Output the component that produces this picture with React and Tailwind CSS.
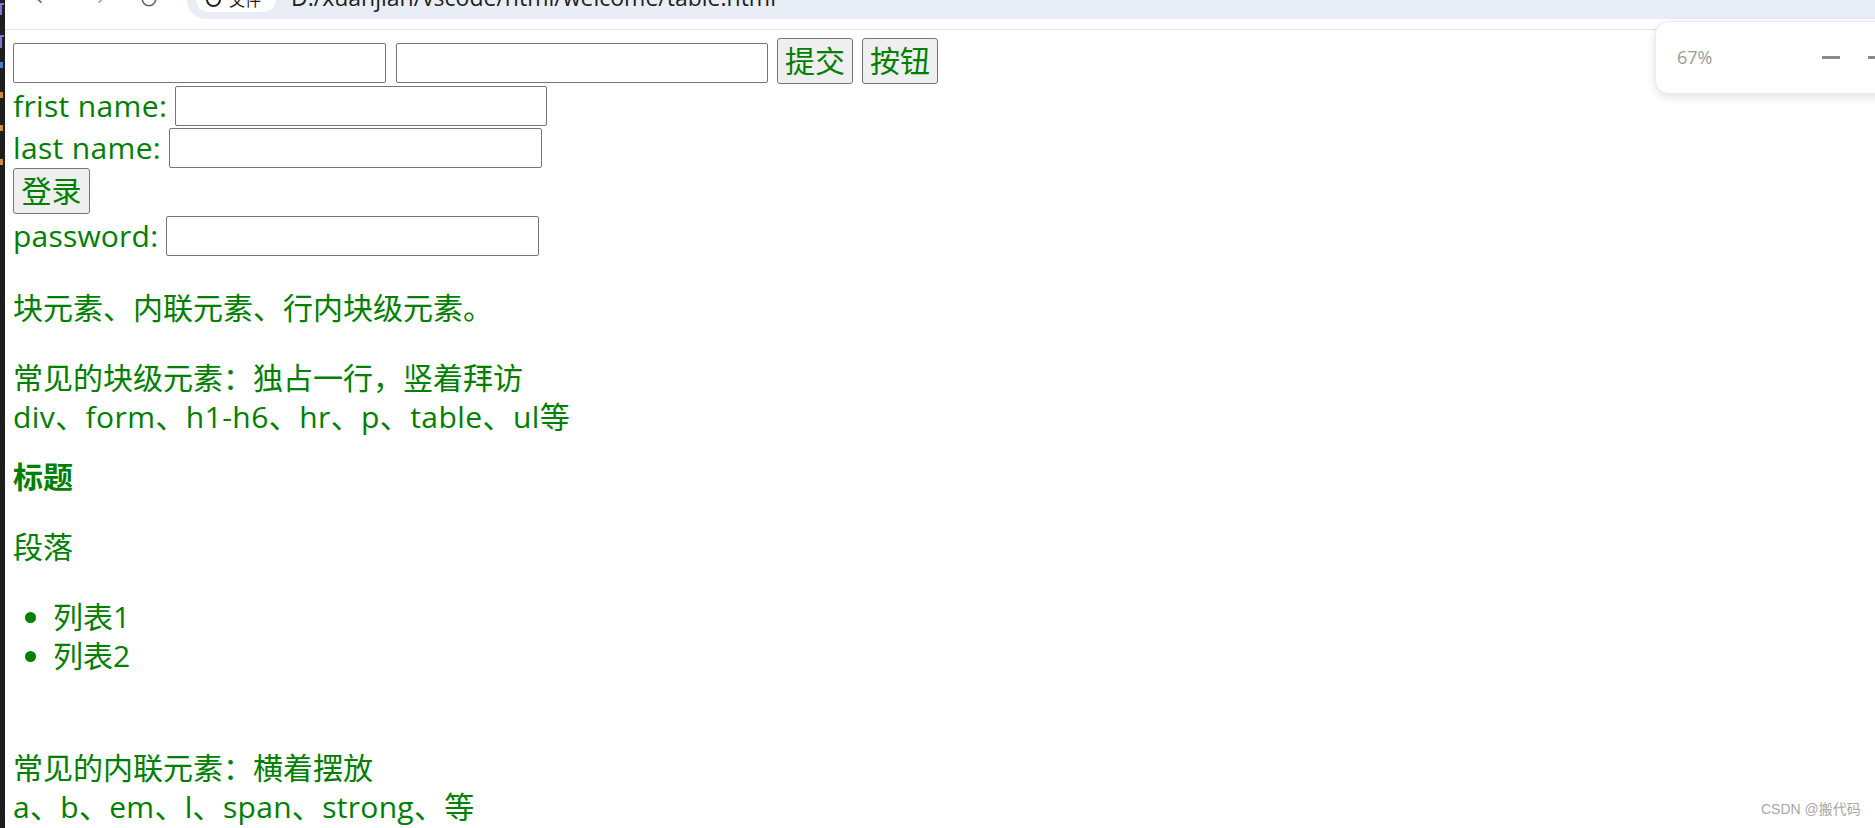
import React from "react";
import { ArrowLeft, ArrowRight, RotateCw } from "lucide-react";

function TextInput({ className = "" }) {
  return (
    <input
      type="text"
      readOnly
      className={`h-[40px] border border-[#767676] rounded-[2px] bg-white shrink-0 outline-none ${className}`}
    />
  );
}

function Btn({ children, className = "" }) {
  return (
    <button
      className={`h-[46px] w-[76px] shrink-0 bg-[#efefef] border border-[#767676] rounded-[3px] text-[30px] leading-[40px] text-[#008000] ${className}`}
    >
      {children}
    </button>
  );
}

export default function App() {
  return (
    <div className="relative w-[1875px] h-[828px] overflow-hidden bg-white flex">
      {/* dark editor strip on the left */}
      <div className="w-[5px] shrink-0 bg-[#1e1e1e] flex flex-col">
        <div className="mt-[3px] h-[12px] w-[4px] border-l-2 border-t-2 border-[#8b6fd6]" />
        <div className="mt-[20px] h-[13px] w-[4px] border-l-2 border-t-2 border-[#8b6fd6]" />
        <div className="mt-[14px] h-[6px] w-[3px] bg-[#4e7fc4]" />
        <div className="mt-[24px] h-[6px] w-[3px] bg-[#d08a48]" />
        <div className="mt-[27px] h-[6px] w-[3px] bg-[#d08a48]" />
        <div className="mt-[28px] h-[6px] w-[3px] bg-[#d08a48]" />
      </div>

      <div className="flex-1 flex flex-col min-w-0">
        {/* browser chrome (cut off at top) */}
        <div className="h-[30px] shrink-0 border-b border-[#e3e3e3] flex items-start overflow-hidden">
          <div className="w-[182px] shrink-0 flex items-start">
            <ArrowLeft className="ml-[27px] -mt-[12px] text-[#5f6368]" size={18} strokeWidth={2.2} />
            <ArrowRight className="ml-[40px] -mt-[12px] text-[#9aa0a6]" size={18} strokeWidth={2.2} />
            <RotateCw className="ml-[32px] -mt-[10px] text-[#5f6368]" size={18} strokeWidth={2.2} />
          </div>
          <div className="flex-1 h-[19px] bg-[#e9edf6] rounded-bl-[20px] flex items-start overflow-hidden">
            <div className="ml-[9px] w-[80px] h-[26px] -mt-[14px] bg-white rounded-full flex items-center px-[10px] gap-[8px] font-['Noto_Sans_CJK_SC',sans-serif] text-[16px] text-[#1f1f1f]">
              <span className="w-[15px] h-[15px] rounded-full border-2 border-[#1f1f1f] shrink-0" />
              <span className="leading-none">文件</span>
            </div>
            <div className="ml-[15px] -mt-[18px] font-['Open_Sans',sans-serif] text-[23px] leading-[30px] text-[#1f1f1f] whitespace-nowrap">
              D:/xuanjian/vscode/html/welcome/table.html
            </div>
          </div>
        </div>

        {/* page content */}
        <div className="pl-[8px] text-[30px] text-[#008000] font-['Open_Sans','Noto_Sans_CJK_SC',sans-serif]">
          <div className="mt-[8px] h-[46px] flex items-end">
            <TextInput className="w-[373px] mb-[1px]" />
            <TextInput className="ml-[10px] w-[372px] mb-[1px]" />
            <Btn className="ml-[9px]">提交</Btn>
            <Btn className="ml-[9px]">按钮</Btn>
          </div>
          <div className="mt-[2px] h-[40px] flex items-center">
            <span className="leading-[40px] whitespace-nowrap tracking-[0.35px]">frist name:</span>
            <TextInput className="ml-[8px] w-[372px]" />
          </div>
          <div className="mt-[2px] h-[40px] flex items-center">
            <span className="leading-[40px] whitespace-nowrap tracking-[0.35px]">last name:</span>
            <TextInput className="ml-[8px] w-[373px]" />
          </div>
          <div className="h-[46px] flex items-center">
            <Btn className="w-[77px]">登录</Btn>
          </div>
          <div className="mt-[2px] h-[40px] flex items-center">
            <span className="leading-[40px] whitespace-nowrap tracking-[0.2px]">password:</span>
            <TextInput className="ml-[8px] w-[373px]" />
          </div>

          <p className="mt-[32px] leading-[40px]">块元素、内联元素、行内块级元素。</p>
          <p className="mt-[30px] leading-[39px]">
            常见的块级元素：独占一行，竖着拜访
            <br />
            <span className="tracking-[0.42px]">div、form、h1-h6、hr、p、table、ul等</span>
          </p>
          <h4 className="mt-[21px] leading-[40px] font-bold">标题</h4>
          <p className="mt-[30px] leading-[40px]">段落</p>
          <ul className="mt-[30px] pl-[40px] list-disc leading-[39px]">
            <li>列表1</li>
            <li>列表2</li>
          </ul>
          <p className="mt-[73px] leading-[39px]">
            常见的内联元素：横着摆放
            <br />
            <span className="tracking-[0.3px]">a、b、em、l、span、strong、等</span>
          </p>
        </div>
      </div>

      {/* zoom popup */}
      <div className="absolute left-[1655px] top-[21px] w-[260px] h-[73px] bg-white rounded-[14px] border border-[#ececec] shadow-[0_3px_10px_rgba(0,0,0,0.12)] flex items-center">
        <span className="ml-[21px] font-['Open_Sans',sans-serif] text-[18px] text-[#9b9b9b]">67%</span>
        <span className="ml-[110px] w-[18px] h-[3px] bg-[#8a8a8a]" />
        <span className="ml-[28px] w-[18px] h-[3px] bg-[#8a8a8a]" />
      </div>

      {/* watermark */}
      <div className="absolute left-[1761px] top-[800px] font-['Liberation_Sans','Noto_Sans_CJK_SC',sans-serif] text-[14px] leading-[18px] text-[#a8a8a8] whitespace-nowrap">
        CSDN @搬代码
      </div>
    </div>
  );
}
